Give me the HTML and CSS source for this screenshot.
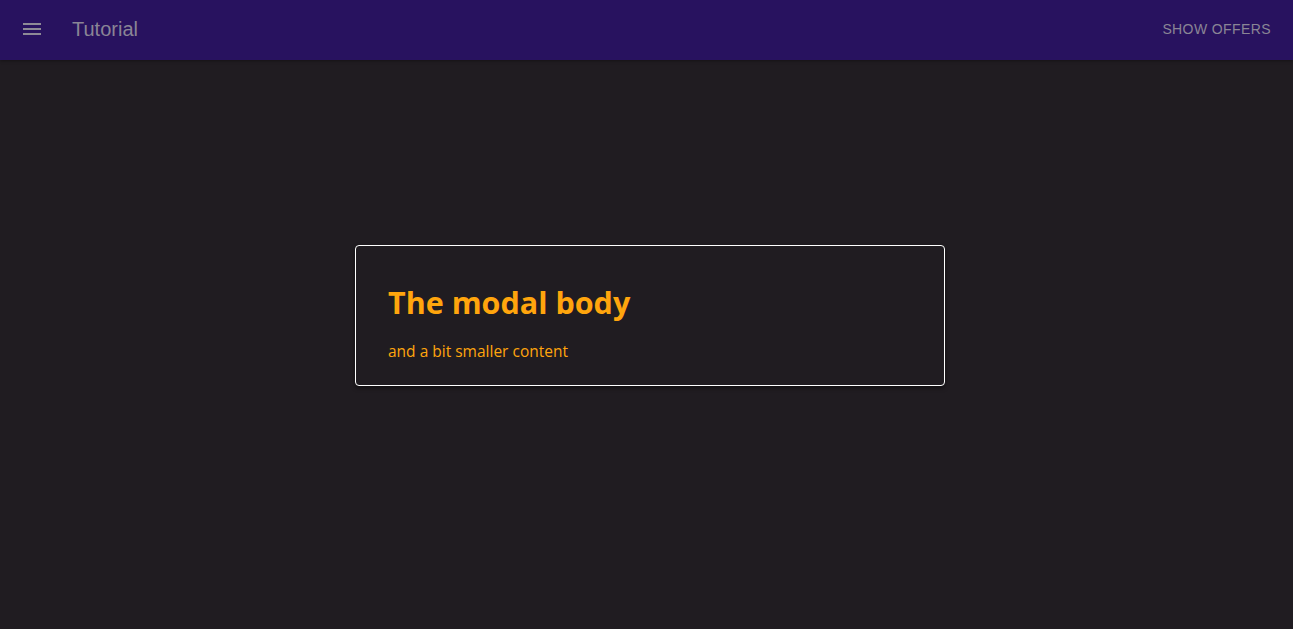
FILE: index.html
```html
<!DOCTYPE html>
<html lang="en">
<head>
<meta charset="utf-8">
<title>Tutorial</title>
<link rel="stylesheet" href="styles.css">
</head>
<body>
<header class="toolbar">
  <button class="menu-btn" aria-label="menu">
    <svg width="24" height="24" viewBox="0 0 24 24"><path d="M3 18h18v-2H3v2zm0-5h18v-2H3v2zm0-7v2h18V6H3z" fill="currentColor"/></svg>
  </button>
  <div class="title">Tutorial</div>
  <div class="spacer"></div>
  <button class="action">Show offers</button>
</header>
<main class="content">
  <section class="modal">
    <h2 class="modal-title">The modal body</h2>
    <p class="modal-text">and a bit smaller content</p>
  </section>
</main>
</body>
</html>
```
FILE: styles.css
```css
html, body {
  margin: 0;
  padding: 0;
  height: 100%;
}
body {
  background: #201c21;
  font-family: "Liberation Sans", Arial, sans-serif;
  display: flex;
  flex-direction: column;
}
.toolbar {
  height: 60px;
  background: #28125f;
  display: flex;
  align-items: center;
  padding: 0 8px 2px 20px;
  box-sizing: border-box;
  box-shadow: 0 1px 3px rgba(0,0,0,0.35);
  flex: none;
}
.menu-btn {
  background: none;
  border: none;
  padding: 0;
  width: 24px;
  height: 24px;
  color: #8e8a96;
  display: flex;
  align-items: center;
  justify-content: center;
  cursor: pointer;
}
.title {
  margin-left: 28px;
  font-size: 20px;
  color: #8a8595;
}
.spacer { flex: 1; }
.action {
  background: none;
  border: none;
  font-family: "Liberation Sans", Arial, sans-serif;
  font-size: 14px;
  text-transform: uppercase;
  letter-spacing: 0.4px;
  color: #8a8595;
  padding: 8px 14px;
}
.content {
  flex: 1;
  display: flex;
  justify-content: center;
  align-items: flex-start;
  padding: 185px 0 0 7px;
}
.modal {
  width: 590px;
  border: 1px solid #ffffff;
  border-radius: 4px;
  padding: 36px 32px 22px 32px;
  box-sizing: border-box;
  background: #201c21;
  box-shadow: 0 2px 4px rgba(0,0,0,0.5);
}
.modal-title {
  margin: 0 0 17px 0;
  font-family: "Open Sans", sans-serif;
  font-weight: 700;
  font-size: 30.5px;
  line-height: 40px;
  color: #ffa50d;
}
.modal-text {
  margin: 0;
  font-family: "Open Sans", sans-serif;
  font-size: 15.5px;
  line-height: 24px;
  color: #ffa50d;
}
```
